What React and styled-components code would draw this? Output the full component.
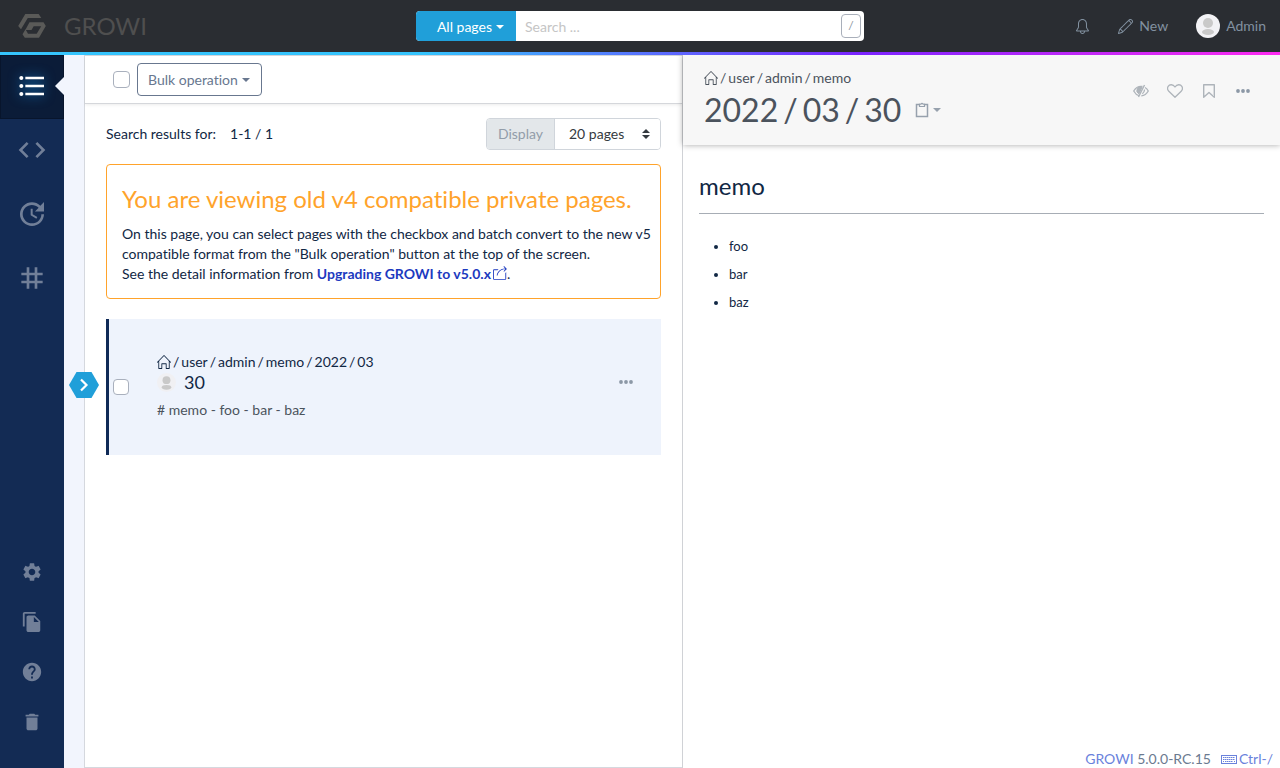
import React, { Fragment } from "react";
import styled, { createGlobalStyle, css } from "styled-components";
import {
  MdFormatListBulleted,
  MdCode,
  MdUpdate,
  MdTag,
  MdSettings,
  MdFileCopy,
  MdHelp,
  MdDelete,
} from "react-icons/md";
import { SlBell, SlPencil, SlHome, SlShareAlt } from "react-icons/sl";

const GlobalStyle = createGlobalStyle`
  *, *::before, *::after { box-sizing: border-box; }
  body {
    margin: 0;
    font-family: Lato, "Liberation Sans", sans-serif;
    font-size: 14px;
    line-height: 20px;
    font-variant-ligatures: none;
    color: #112744;
    background: #fff;
  }
  button, input, select { font: inherit; font-variant-ligatures: none; }
  svg { display: block; flex: none; }
  h1, h2, p, ul { margin: 0; padding: 0; font-weight: 400; }
`;

const Page = styled.div`
  min-height: 100vh;
  display: flex;
  flex-direction: column;
`;

/* ---------- top bar ---------- */

const TopBar = styled.header`
  height: 55px;
  flex: none;
  display: grid;
  grid-template-columns: minmax(0, 1fr) minmax(0, 448px) minmax(0, 1fr);
  align-items: center;
  background: #2a2d32;
  border-bottom: 3px solid;
  border-image: linear-gradient(90deg, #35c4fd 0%, #35c4fd 33%, #7a24ff 67%, #ff2bf1 100%) 1;
`;

const Brand = styled.a`
  display: flex;
  align-items: center;
  gap: 18px;
  padding-left: 18px;
  font-size: 24px;
  line-height: 32px;
  color: #4f4f4f;
  text-decoration: none;
`;

const SearchForm = styled.form`
  display: flex;
  height: 30px;
  border-radius: 4px;
  overflow: hidden;
  background: #fff;
`;

const ScopeButton = styled.button`
  width: 100px;
  flex: none;
  display: flex;
  align-items: center;
  justify-content: flex-end;
  gap: 4px;
  padding: 2px 12px 0;
  border: 0;
  background: #209fd9;
  color: #fff;
  white-space: nowrap;
`;

const SearchInput = styled.input`
  flex: 1;
  min-width: 0;
  border: 0;
  outline: 0;
  padding: 2px 9px 0;
  background: transparent;
  &::placeholder { color: #c5c5c5; opacity: 1; }
`;

const KeyHint = styled.kbd`
  align-self: center;
  width: 20px;
  height: 24px;
  margin-right: 3px;
  border: 1px solid #a9afba;
  border-radius: 4px;
  font: 12px/22px Lato, sans-serif;
  text-align: center;
  color: #8c95a0;
`;

const Caret = styled.span`
  border: 4px solid transparent;
  border-top-color: currentColor;
  border-bottom: 0;
`;

const UserNav = styled.nav`
  display: flex;
  align-items: center;
  justify-content: flex-end;
  gap: 28px;
  padding-right: 14px;
`;

const NavButton = styled.button`
  display: flex;
  align-items: center;
  gap: 6px;
  padding: 0;
  border: 0;
  background: none;
  color: #8291a0;
`;

/* ---------- sidebar ---------- */

const Body = styled.div`
  flex: 1;
  display: flex;
`;

const Sidebar = styled.nav`
  width: 64px;
  flex: none;
  display: flex;
  flex-direction: column;
  justify-content: space-between;
  padding-bottom: 21px;
  background: #132b54;
`;

const IconStack = styled.div`
  display: flex;
  flex-direction: column;
`;

const MainItem = styled.button`
  position: relative;
  height: 64px;
  display: grid;
  place-items: center;
  padding: 0 0 2px;
  border: 0;
  background: none;
  color: #717f98;
  ${(p) =>
    p.$active &&
    css`
      border: 1px solid #08152c;
      background: #0b1c38;
      color: #fff;
      svg {
        filter: drop-shadow(0 0 6px #0f7fd0);
      }
      &::after {
        content: "";
        position: absolute;
        right: -1px;
        top: 21px;
        border: 9px solid transparent;
        border-left: 0;
        border-right-color: #f2f5fd;
      }
    `}
`;

const SubItem = styled.a`
  height: 50px;
  display: grid;
  place-items: center;
  color: #717f98;
`;

const Gutter = styled.div`
  position: relative;
  width: 20px;
  flex: none;
  background: #f2f5fd;
`;

const ExpandButton = styled.button`
  position: absolute;
  z-index: 2;
  left: 5px;
  top: calc(50% - 40px);
  padding: 0;
  border: 0;
  background: none;
`;

/* ---------- result list ---------- */

const ListPane = styled.section`
  flex: 1 1 0;
  min-width: 0;
  border: 1px solid #d5d8de;
  border-right: 0;
`;

const Toolbar = styled.div`
  display: flex;
  align-items: center;
  gap: 7px;
  height: 48px;
  padding-left: 28px;
  border-bottom: 1px solid #d5d7db;
  box-shadow: 0 1px 3px rgba(0, 0, 0, 0.08);
`;

const Checkbox = styled.input.attrs({ type: "checkbox" })`
  appearance: none;
  flex: none;
  width: ${(p) => p.$size}px;
  height: ${(p) => p.$size}px;
  margin: 0;
  border: 1px solid #a9b0bd;
  border-radius: 4px;
  background: #fff;
`;

const BulkButton = styled.button`
  display: flex;
  align-items: center;
  gap: 4px;
  height: 33px;
  padding: 0 11px 0 10px;
  border: 1px solid #68778f;
  border-radius: 4px;
  background: #fff;
  color: #68778f;
`;

const Results = styled.div`
  padding: 14px 21px;
`;

const ResultsHead = styled.div`
  display: flex;
  align-items: center;
  justify-content: space-between;
  height: 32px;
  margin-bottom: 14px;
`;

const Counts = styled.p`
  display: flex;
  gap: 14px;
`;

const DisplayGroup = styled.div`
  display: flex;
  height: 32px;
  border: 1px solid #d0d5db;
  border-radius: 4px;
  overflow: hidden;
`;

const DisplayLabel = styled.label`
  display: flex;
  align-items: center;
  padding: 0 11px;
  background: #e3e7ea;
  border-right: 1px solid #d0d5db;
  color: #929da9;
`;

const SelectWrap = styled.div`
  display: flex;
  align-items: center;
`;

const PageSelect = styled.select`
  appearance: none;
  width: 105px;
  height: 30px;
  padding: 0 14px;
  border: 0;
  background: #fff;
  color: #343a40;
`;

const SelectArrows = styled.svg`
  margin-left: -18px;
  margin-right: 10px;
  pointer-events: none;
`;

const Notice = styled.div`
  margin-bottom: 20px;
  padding: 19px 5px 14px 15px;
  border: 1px solid #ffa32b;
  border-radius: 4px;
`;

const NoticeTitle = styled.h2`
  margin-bottom: 10px;
  font-size: 24px;
  line-height: 30px;
  color: #ffa32b;
`;

const NoticeLink = styled.a`
  font-weight: 700;
  color: #1d3abf;
  text-decoration: none;
  svg {
    display: inline-block;
    vertical-align: -1px;
    margin-left: 2px;
  }
`;

const ResultItem = styled.article`
  display: flex;
  align-items: center;
  height: 136px;
  padding: 0 27px 0 4px;
  border-left: 3px solid #0f2a57;
  background: #eef3fc;
`;

const ResultText = styled.div`
  flex: 1;
  min-width: 0;
  margin-left: 28px;
  padding-bottom: 2px;
`;

const PathLine = styled.div`
  display: flex;
  align-items: center;
  gap: 2px;
  color: ${(p) => p.$color || "inherit"};
  a { color: inherit; text-decoration: none; }
`;

const ResultTitle = styled.h2`
  display: flex;
  align-items: center;
  gap: 8px;
  font-size: 18px;
  line-height: 20px;
`;

const Snippet = styled.p`
  margin-top: 8px;
  color: #4b535d;
`;

const IconButton = styled.button`
  display: grid;
  place-items: center;
  width: 16px;
  padding: 0;
  border: 0;
  background: none;
  color: ${(p) => p.$color || "#aeb4ba"};
`;

const ItemMenu = styled(IconButton)`
  align-self: flex-start;
  margin-top: 61px;
`;

/* ---------- page preview ---------- */

const PreviewPane = styled.section`
  flex: 1 1 0;
  min-width: 0;
  display: flex;
  flex-direction: column;
  border-left: 1px solid #d0d2d6;
`;

const PreviewHead = styled.header`
  display: flex;
  justify-content: space-between;
  height: 90px;
  padding: 13px 29px 0 21px;
  background: #f7f7f7;
  box-shadow: 0 0 6px rgba(0, 0, 0, 0.35);
  clip-path: inset(0 0 -10px -10px);
`;

const PageTitle = styled.div`
  display: flex;
  align-items: center;
  gap: 14px;
  margin-top: 2px;
`;

const TitleText = styled.h1`
  display: flex;
  gap: 5px;
  font-size: 32px;
  line-height: 40px;
  color: #4b535d;
`;

const CopyButton = styled.button`
  display: flex;
  align-items: center;
  gap: 4px;
  padding: 0;
  border: 0;
  background: none;
  color: #97a1ad;
`;

const Actions = styled.div`
  display: flex;
  align-items: center;
  gap: 18px;
  height: 20px;
  margin-top: 13px;
`;

const Article = styled.div`
  flex: 1;
  padding: 23px 16px;
`;

const ArticleTitle = styled.h1`
  padding-bottom: 10px;
  border-bottom: 1px solid #a7adb5;
  font-size: 24px;
  line-height: 35px;
`;

const BulletList = styled.ul`
  margin-top: 18px;
  padding-left: 30px;
  font-size: 13px;
  line-height: 28px;
`;

const Footer = styled.footer`
  display: flex;
  justify-content: flex-end;
  gap: 10px;
  padding: 0 7px;
  margin-bottom: -1px;
  color: #6b7a90;
  a {
    color: #6a82dc;
    text-decoration: none;
  }
`;

const Shortcut = styled.a`
  display: flex;
  align-items: center;
  gap: 2px;
`;

/* ---------- drawings ---------- */

const Logo = () => (
  <svg width="28" height="24" viewBox="0 0 28 24" fill="#5a5a58" aria-hidden="true">
    <path d="M7.300 0H20.700L23.300 4H9.800L3 15.300L0.200 12Z" />
    <path d="M11.500 8.300H25.500L27.800 12L21 23.800H6.800L4.500 20.200L7.500 15.300L10 19.800H18.700L23.200 12.300H15.700L13.500 16H7.300Z" />
  </svg>
);

const Avatar = ({ size, bg }) => (
  <svg width={size} height={size} viewBox="0 0 24 24" aria-hidden="true">
    <circle cx="12" cy="12" r="12" fill={bg} />
    <circle cx="12" cy="9" r="5" fill="#c9c9c9" />
    <ellipse cx="12" cy="18" rx="6" ry="3" fill="#c9c9c9" />
  </svg>
);

const Dots = () => (
  <svg width="14" height="4" viewBox="0 0 14 4" fill="currentColor" aria-hidden="true">
    <circle cx="2" cy="2" r="1.900" />
    <circle cx="7" cy="2" r="1.900" />
    <circle cx="12" cy="2" r="1.900" />
  </svg>
);

const Clipboard = () => (
  <svg width="14" height="16" viewBox="0 0 14 16" fill="none" stroke="currentColor" aria-hidden="true">
    <path d="M4 2.500H1.500V14.500H12.500V2.500H10" strokeWidth="1.500" />
    <path d="M4.500 4.500V2.200H6Q7 0.300 8 2.200H9.500V4.500Z" strokeWidth="1.200" />
  </svg>
);

const EyeSlash = () => (
  <svg width="16" height="14" viewBox="0 0 16 14" fill="none" stroke="currentColor" aria-hidden="true">
    <path d="M6 11.700Q2.800 10.800 0.700 7Q3.500 2.300 8 2.300L9.500 2.500" strokeWidth="1.300" />
    <path d="M12 3.500Q14 4.700 15.300 7Q12.800 11.500 8.300 11.800" strokeWidth="1.300" />
    <path d="M11.500 1L5.500 13" strokeWidth="1.400" />
    <path d="M9 3.200A3.600 3.600 0 0 0 6 9.800Z" fill="currentColor" />
    <path d="M11.600 5.500Q11.500 8 9.300 9.700" strokeWidth="1.300" />
  </svg>
);

const Heart = () => (
  <svg width="16" height="14" viewBox="0 0 16 14" fill="none" stroke="currentColor" strokeWidth="1.300" strokeLinejoin="round" aria-hidden="true">
    <path d="M8 13.300L1.800 7.300C0.500 6 0.400 3.700 1.200 2.300C2.500 0.200 6 0 8 3C10 0 13.500 0.200 14.800 2.300C15.600 3.700 15.500 6 14.200 7.300Z" />
  </svg>
);

const Bookmark = () => (
  <svg width="12" height="14" viewBox="0 0 12 14" fill="none" stroke="currentColor" strokeWidth="1.400" strokeLinejoin="round" aria-hidden="true">
    <path d="M0.700 0.700H11.300V13.200L6 8.500L0.700 13.200Z" />
  </svg>
);

const Keyboard = () => (
  <svg width="16" height="9" viewBox="0 0 16 9" fill="none" stroke="currentColor" aria-hidden="true">
    <rect x="0.500" y="0.500" width="15" height="8" />
    <path d="M2 2.500H14M2 4.500H14M2 6.500H3M4 6.500H12M13 6.500H14" strokeDasharray="1.500 0.500" />
  </svg>
);

const Hexagon = () => (
  <svg width="30" height="26" viewBox="0 0 30 26" aria-hidden="true">
    <path d="M7.500 0H22.500L30 13L22.500 26H7.500L0 13Z" fill="#209fd9" />
    <path d="M12 7.500L17.500 13L12 18.500" fill="none" stroke="#fff" strokeWidth="2.200" />
  </svg>
);

const Breadcrumb = ({ parts, color }) => (
  <PathLine $color={color}>
    <SlHome size={14} />
    {parts.map((part) => (
      <Fragment key={part}>
        <span>/</span>
        <a href="#">{part}</a>
      </Fragment>
    ))}
  </PathLine>
);

const mainItems = [
  { label: "Page tree", Icon: MdFormatListBulleted, active: true },
  { label: "Custom sidebar", Icon: MdCode },
  { label: "Recent changes", Icon: MdUpdate },
  { label: "Tags", Icon: MdTag },
];

const subItems = [
  { label: "Settings", Icon: MdSettings },
  { label: "Drafts", Icon: MdFileCopy },
  { label: "Help", Icon: MdHelp },
  { label: "Trash", Icon: MdDelete },
];

export default function App() {
  return (
    <Page>
      <GlobalStyle />
      <TopBar>
        <Brand href="#">
          <Logo />
          GROWI
        </Brand>
        <SearchForm role="search">
          <ScopeButton type="button">
            All pages
            <Caret />
          </ScopeButton>
          <SearchInput type="text" placeholder="Search ..." aria-label="Search" />
          <KeyHint>/</KeyHint>
        </SearchForm>
        <UserNav>
          <NavButton aria-label="Notifications">
            <SlBell size={15} />
          </NavButton>
          <NavButton>
            <SlPencil size={15} />
            New
          </NavButton>
          <NavButton>
            <Avatar size={24} bg="#f2f2f5" />
            Admin
          </NavButton>
        </UserNav>
      </TopBar>

      <Body>
        <Sidebar>
          <IconStack>
            {mainItems.map(({ label, Icon, active }) => (
              <MainItem key={label} aria-label={label} $active={active}>
                <Icon size={32} />
              </MainItem>
            ))}
          </IconStack>
          <IconStack>
            {subItems.map(({ label, Icon }) => (
              <SubItem key={label} href="#" aria-label={label}>
                <Icon size={22} />
              </SubItem>
            ))}
          </IconStack>
        </Sidebar>
        <Gutter>
          <ExpandButton aria-label="Expand sidebar">
            <Hexagon />
          </ExpandButton>
        </Gutter>

        <ListPane>
          <Toolbar>
            <Checkbox $size={17} aria-label="Select all" />
            <BulkButton>
              Bulk operation
              <Caret />
            </BulkButton>
          </Toolbar>
          <Results>
            <ResultsHead>
              <Counts>
                <span>Search results for:</span>
                <span>1-1 / 1</span>
              </Counts>
              <DisplayGroup>
                <DisplayLabel htmlFor="page-size">Display</DisplayLabel>
                <SelectWrap>
                  <PageSelect id="page-size" defaultValue="20">
                    <option value="20">20 pages</option>
                    <option value="50">50 pages</option>
                  </PageSelect>
                  <SelectArrows width="8" height="10" viewBox="0 0 8 10" fill="#343a40">
                    <path d="M4 0L8 4H0ZM4 10L0 6H8Z" />
                  </SelectArrows>
                </SelectWrap>
              </DisplayGroup>
            </ResultsHead>

            <Notice>
              <NoticeTitle>You are viewing old v4 compatible private pages.</NoticeTitle>
              <p>
                On this page, you can select pages with the checkbox and batch convert to the new v5
                compatible format from the "Bulk operation" button at the top of the screen.
                <br />
                See the detail information from{" "}
                <NoticeLink href="#">
                  Upgrading GROWI to v5.0.x
                  <SlShareAlt size={14} />
                </NoticeLink>
                .
              </p>
            </Notice>

            <ResultItem>
              <Checkbox $size={16} aria-label="Select page 30" />
              <ResultText>
                <Breadcrumb parts={["user", "admin", "memo", "2022", "03"]} />
                <ResultTitle>
                  <Avatar size={19} bg="#f0f0f3" />
                  30
                </ResultTitle>
                <Snippet># memo - foo - bar - baz</Snippet>
              </ResultText>
              <ItemMenu $color="#8c98a6" aria-label="Page menu">
                <Dots />
              </ItemMenu>
            </ResultItem>
          </Results>
        </ListPane>

        <PreviewPane>
          <PreviewHead>
            <div>
              <Breadcrumb color="#4b535d" parts={["user", "admin", "memo"]} />
              <PageTitle>
                <TitleText>
                  <span>2022</span>
                  <span>/</span>
                  <span>03</span>
                  <span>/</span>
                  <span>30</span>
                </TitleText>
                <CopyButton aria-label="Copy path">
                  <Clipboard />
                  <Caret />
                </CopyButton>
              </PageTitle>
            </div>
            <Actions>
              <IconButton aria-label="Unsubscribe">
                <EyeSlash />
              </IconButton>
              <IconButton aria-label="Like">
                <Heart />
              </IconButton>
              <IconButton aria-label="Bookmark">
                <Bookmark />
              </IconButton>
              <IconButton $color="#8c98a6" aria-label="More">
                <Dots />
              </IconButton>
            </Actions>
          </PreviewHead>
          <Article>
            <ArticleTitle>memo</ArticleTitle>
            <BulletList>
              <li>foo</li>
              <li>bar</li>
              <li>baz</li>
            </BulletList>
          </Article>
          <Footer>
            <span>
              <a href="#">GROWI</a> 5.0.0-RC.15
            </span>
            <Shortcut href="#">
              <Keyboard />
              Ctrl-/
            </Shortcut>
          </Footer>
        </PreviewPane>
      </Body>
    </Page>
  );
}
